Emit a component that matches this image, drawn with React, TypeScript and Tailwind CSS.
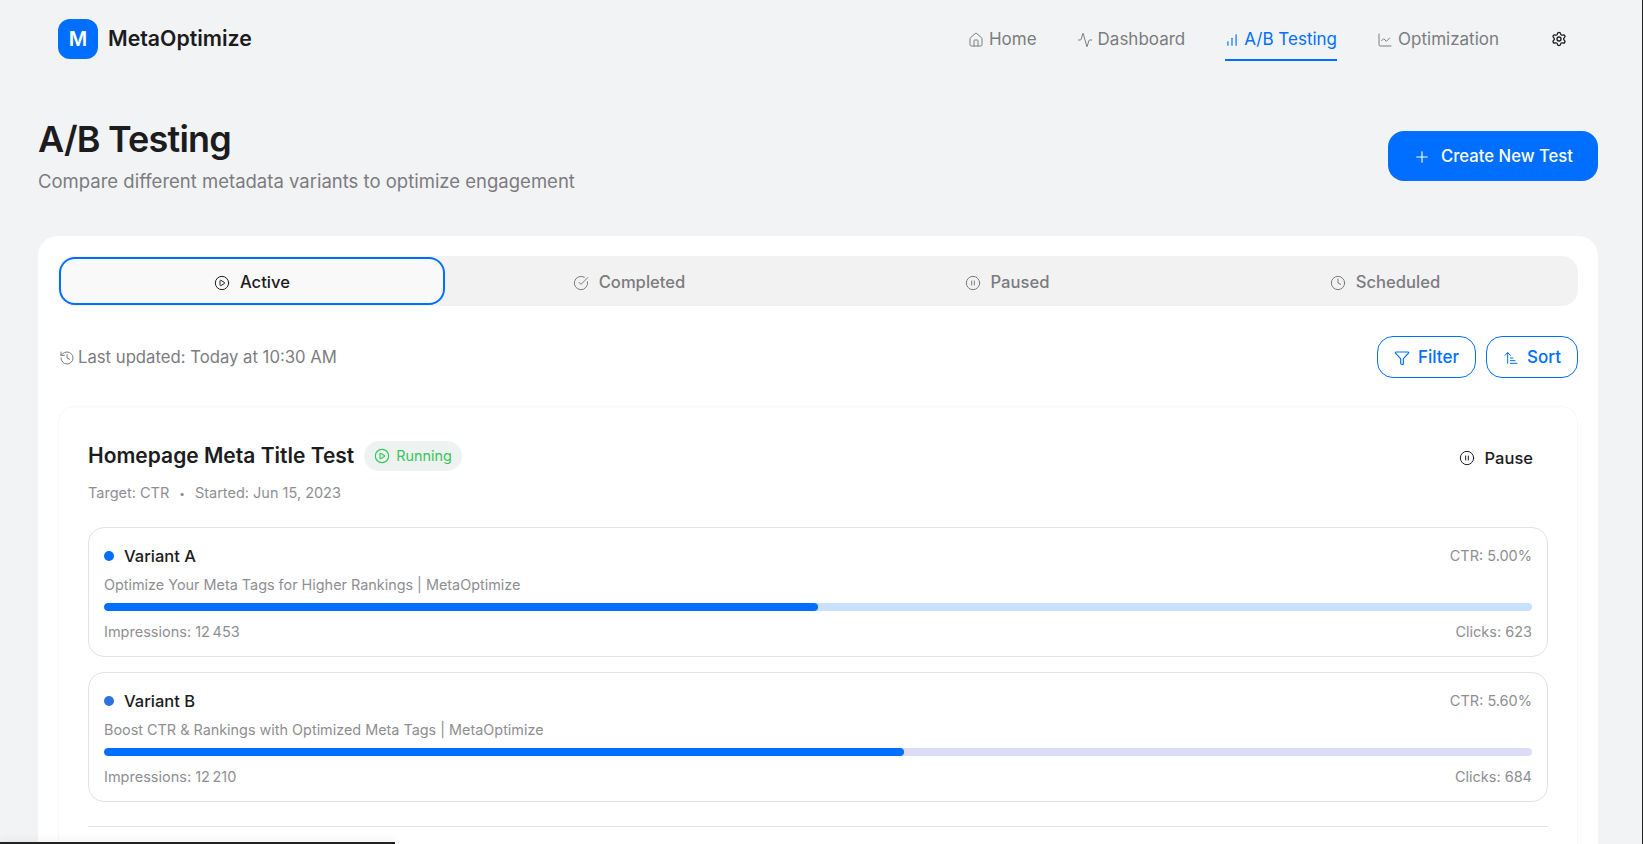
import { Home, Activity, ChartNoAxesColumnIncreasing, ChartLine, Settings, Plus, CirclePlay, CircleCheckBig, CirclePause, Clock, History, Filter, ArrowUpNarrowWide } from 'lucide-react';

const font = { fontFamily: 'Inter, "Noto Sans", sans-serif' };

const navItems = [
  { label: 'Home', icon: Home, size: 16 },
  { label: 'Dashboard', icon: Activity, size: 16 },
  { label: 'A/B Testing', icon: ChartNoAxesColumnIncreasing, size: 14, active: true },
  { label: 'Optimization', icon: ChartLine, size: 16 },
];

const tabs = [
  { label: 'Active', icon: CirclePlay, active: true },
  { label: 'Completed', icon: CircleCheckBig },
  { label: 'Paused', icon: CirclePause },
  { label: 'Scheduled', icon: Clock },
];

function VariantCard({ name, ctr, title, impressions, clicks, fill, dotClass, trackClass }: {
  name: string; ctr: string; title: string; impressions: string; clicks: string; fill: number; dotClass: string; trackClass: string;
}) {
  return (
    <div className="h-[130px] rounded-2xl border border-[#e3e3e6] px-[15px] pt-[15px]">
      <div className="flex h-[26px] items-center justify-between">
        <div className="flex items-center gap-[10px]">
          <span className={`size-[10px] rounded-full ${dotClass}`} />
          <span className="text-[16.5px] font-medium text-[#1c1c1e]">{name}</span>
        </div>
        <span className="text-[14.5px] text-[#8e8e93]">{ctr}</span>
      </div>
      <p className="mt-[3px] text-[14.4px] leading-[26px] text-[#8e8e93]">{title}</p>
      <div className={`mt-[5px] h-2 overflow-hidden rounded-full ${trackClass}`}>
        <div className="h-full rounded-full bg-[#006fff]" style={{ width: `${fill}%` }} />
      </div>
      <div className="mt-[8px] flex justify-between text-[14.5px] leading-[26px] text-[#8e8e93]">
        <span>Impressions: {impressions}</span>
        <span>Clicks: {clicks}</span>
      </div>
    </div>
  );
}

export default function App() {
  return (
    <div style={font} className="relative h-screen overflow-hidden bg-[#f2f3f5]">
      <nav className="flex h-[78px] items-center justify-between pl-[58px] pr-[76px]">
        <div className="flex items-center gap-[10px]">
          <div className="flex size-10 items-center justify-center rounded-xl bg-[#006fff] text-xl font-semibold text-white">M</div>
          <span className="text-[21.3px] font-semibold text-[#1c1c1e]">MetaOptimize</span>
        </div>
        <div className="flex items-center gap-10">
          {navItems.map((item) => (
            <a
              key={item.label}
              className={`flex h-[44px] items-center gap-[5px] border-b-2 pt-[4px] text-[17px] ${item.active ? 'border-[#006fff] text-[#006fff]' : 'border-transparent text-[#7c7c80]'}`}
            >
              <item.icon size={item.size} strokeWidth={item.active ? 2 : 1.5} />
              {item.label}
            </a>
          ))}
          <Settings size={16} className="ml-[12px] text-[#1c1c1e]" />
        </div>
      </nav>

      <main className="pl-[38px] pr-[45px]">
        <div className="mt-[34px] flex items-start justify-between">
          <div>
            <h1 className="text-4xl font-semibold leading-[55px] tracking-[-0.8px] text-[#1c1c1e]">A/B Testing</h1>
            <p className="text-[18.5px] leading-[28px] text-[#7c7c80]">Compare different metadata variants to optimize engagement</p>
          </div>
          <button className="mt-[19px] flex h-[50px] w-[210px] items-center justify-center gap-[10px] rounded-2xl bg-[#006fff] pt-[2px] text-[16.7px] font-medium text-white">
            <Plus size={18} strokeWidth={1.5} />
            Create New Test
          </button>
        </div>

        <section className="mt-[41px] h-[700px] rounded-[20px] bg-white p-5">
          <div className="grid h-[50px] grid-cols-4 rounded-2xl bg-[#f2f2f3] px-1 py-[1px]">
            {tabs.map((tab) => (
              <button
                key={tab.label}
                className={`flex items-center justify-center gap-[10px] pt-[3px] text-[16.6px] font-medium ${tab.active ? '-ml-[3px] -mr-[5px] rounded-2xl border-2 border-[#006fff] bg-[#f9f9f9] text-[#1c1c1e]' : 'text-[#7c7c80]'}`}
              >
                <tab.icon size={16} strokeWidth={1.5} />
                {tab.label}
              </button>
            ))}
          </div>

          <div className="mt-[30px] flex h-[42px] items-center justify-between">
            <div className="ml-[1px] flex items-center gap-[3px] pt-[2px] text-[16.7px] text-[#7c7c80]">
              <History size={16} strokeWidth={1.5} />
              Last updated: Today at 10:30 AM
            </div>
            <div className="flex gap-[10px]">
              <button className="flex h-[42px] w-[99px] items-center justify-center gap-2 rounded-2xl border border-[#006fff] pt-[2px] text-[17px] font-medium text-[#006fff]">
                <Filter size={16} strokeWidth={1.75} />
                Filter
              </button>
              <button className="flex h-[42px] w-[92px] items-center justify-center gap-2 rounded-2xl border border-[#006fff] pt-[2px] text-[17px] font-medium text-[#006fff]">
                <ArrowUpNarrowWide size={16} strokeWidth={1.5} />
                Sort
              </button>
            </div>
          </div>

          <div className="mt-[28px] h-[600px] rounded-2xl border border-[#f8f8f9] px-[29px] pt-[31px]">
            <div className="flex h-[36px] items-center justify-between">
              <div className="flex items-center gap-[10px]">
                <h2 className="text-[21px] font-semibold text-[#1c1c1e]">Homepage Meta Title Test</h2>
                <span className="flex h-[30px] items-center gap-[6px] rounded-full bg-[#eef2f1] px-[10px] text-[14.4px] text-[#34c759]">
                  <CirclePlay size={16} strokeWidth={1.75} />
                  Running
                </span>
              </div>
              <button className="mr-[15px] mt-[4px] flex items-center gap-[10px] text-[16.5px] font-medium text-[#1c1c1e]">
                <CirclePause size={16} strokeWidth={1.5} />
                Pause
              </button>
            </div>
            <div className="mt-[6px] flex items-center gap-[10px] text-[14.5px] leading-[26px] text-[#8e8e93]">
              <span>Target: CTR</span>
              <span className="text-[10px]">•</span>
              <span>Started: Jun 15, 2023</span>
            </div>
            <div className="mt-[21px] flex flex-col gap-[15px]">
              <VariantCard name="Variant A" ctr="CTR: 5.00%" title="Optimize Your Meta Tags for Higher Rankings | MetaOptimize" impressions={'12\u202f453'} clicks="623" fill={50} dotClass="bg-[#006fff]" trackClass="bg-[#c9e0ff]" />
              <VariantCard name="Variant B" ctr="CTR: 5.60%" title="Boost CTR & Rankings with Optimized Meta Tags | MetaOptimize" impressions={'12\u202f210'} clicks="684" fill={56} dotClass="bg-[#2c73e0]" trackClass="bg-[#dcdcf9]" />
            </div>
            <div className="mt-[24px] border-t border-[#e3e3e6]" />
          </div>
        </section>
      </main>

      {/* window edge showing in the capture */}
      <div className="absolute inset-y-0 right-0 w-px bg-[#222222]" />
      <div className="absolute bottom-0 left-0 h-[2px] w-[395px] bg-[#222222] shadow-[0_0_10px_rgba(0,0,0,0.2)]" />
    </div>
  );
}
